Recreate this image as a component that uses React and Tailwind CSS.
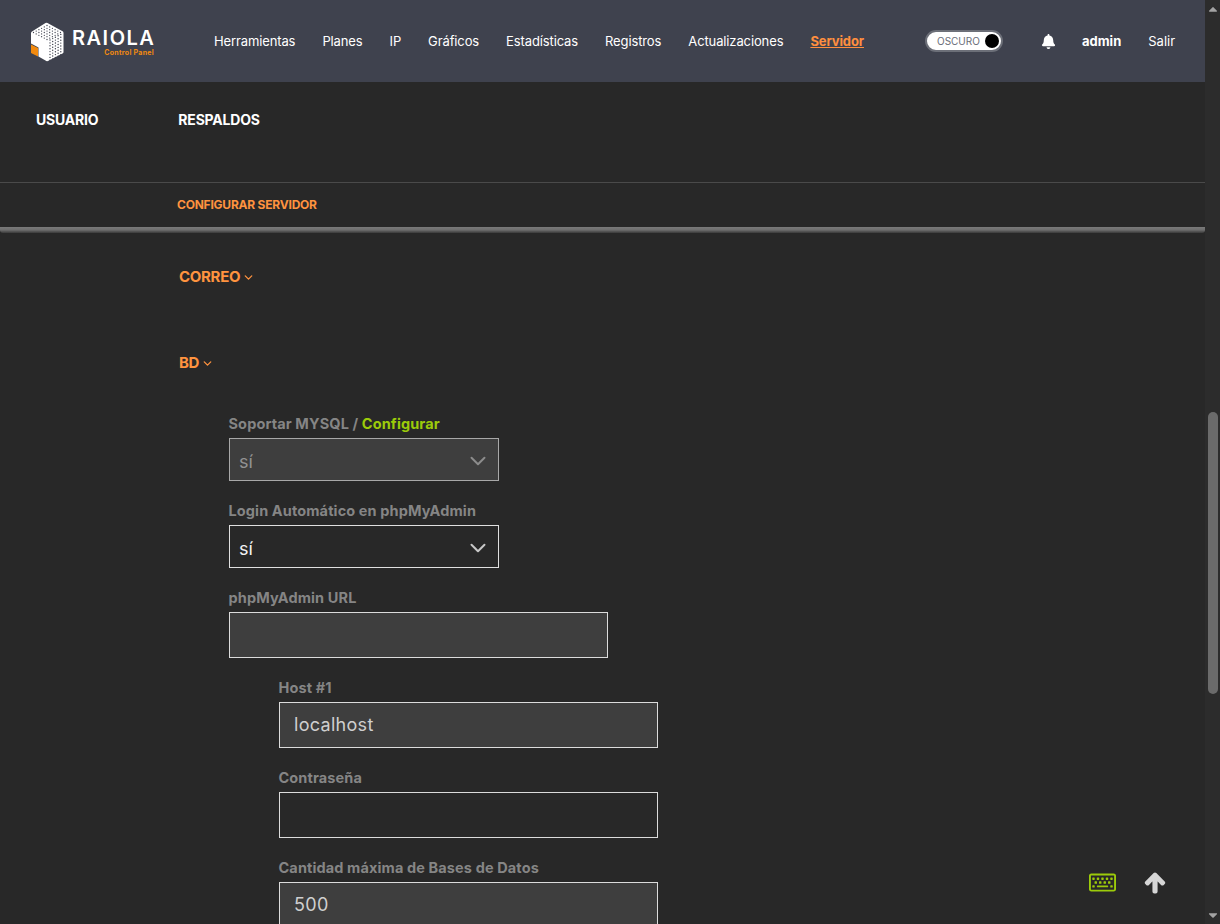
import React from "react";
import { FaBell, FaRegKeyboard, FaArrowUp, FaCaretUp, FaCaretDown } from "react-icons/fa";
import { ChevronDown } from "lucide-react";

const FONT = "font-['Inter','Open_Sans',sans-serif]";

function Logo() {
  const dots = [];
  // top face dots
  for (let i = 0; i < 6; i++) {
    for (let j = 0; j < 6; j++) {
      dots.push(<circle key={`t${i}${j}`} cx={17 + i * 2.7 - j * 2.7} cy={3.5 + i * 1.4 + j * 1.4} r="0.65" fill="#3f424e" />);
    }
  }
  // right face dots
  for (let i = 0; i < 5; i++) {
    for (let j = 0; j < 8; j++) {
      dots.push(<circle key={`r${i}${j}`} cx={20 + i * 2.7} cy={18 - i * 1.4 + j * 2.9} r="0.7" fill="#3f424e" />);
    }
  }
  return (
    <svg width="34" height="40" viewBox="0 0 34 40" className="shrink-0">
      <path d="M17.5 1 L33 9.5 Q33.500 10 33.500 11 L33.500 30 Q33.500 31 32.500 31.500 L18 39 Q16.500 39.500 15.500 38.500 L8.500 34.500 L8.500 25.500 L1 21.500 L1 11 Q1 10 2 9.500 L15.500 1 Q16.500 0.500 17.500 1 Z" fill="#fff" />
      {dots}
      <path d="M1 22.500 L8 26 L8 34.500 L1 31 Z" fill="#f28a0f" />
    </svg>
  );
}

function Label({ children }) {
  return <label className="-ml-[0.5px] block text-[14.5px] leading-[20px] font-bold tracking-[0.12px] text-[#858585]">{children}</label>;
}

function SelectBox({ disabled }) {
  return (
    <div className="relative mt-[4px] w-[270px]">
      <select
        disabled={disabled}
        defaultValue="si"
        className={`block h-[43px] w-full appearance-none rounded-none border pt-[4px] pl-[9px] text-[18px] outline-none ${
          disabled ? "border-[#a8a8a8] bg-[#3e3e3e] text-[#929292]" : "border-[#e0e0e0] bg-[#282828] text-[#f2f2f2]"
        }`}
      >
        <option value="si">sí</option>
      </select>
      <ChevronDown
        size={26}
        strokeWidth={1.8}
        className={`pointer-events-none absolute right-[8px] top-[10px] ${disabled ? "text-[#8c8c8c]" : "text-[#c8c8c8]"}`}
      />
    </div>
  );
}

function TextBox({ value = "", filled }) {
  return (
    <input
      readOnly
      value={value}
      className={`mt-[4px] block h-[46px] w-[379px] rounded-none border border-[#dcdcdc] px-[14px] pb-[2px] text-[18px] tracking-[0.3px] text-[#cfcfcf] outline-none ${
        filled ? "bg-[#3e3e3e]" : "bg-[#282828]"
      }`}
    />
  );
}

const NAV = ["Herramientas", "Planes", "IP", "Gráficos", "Estadísticas", "Registros", "Actualizaciones"];

export default function App() {
  return (
    <div className={`relative flex h-[924px] w-[1220px] overflow-hidden bg-[#282828] ${FONT}`}>
      <div className="w-[1205px] shrink-0">
        <header className="flex h-[82px] items-center bg-[#3f424e] pt-[1px] text-[13px] text-white">
          <div className="ml-[30px] flex w-[184px] items-center gap-[8px]">
            <Logo />
            <div className="flex w-[82px] flex-col">
              <span className="text-[20px] leading-[22px] font-semibold tracking-[1.5px] whitespace-nowrap text-white">RAIOLA</span>
              <span className="self-end text-[7px] leading-[7px] font-bold tracking-[0.3px] whitespace-nowrap text-[#f28a0f]">Control Panel</span>
            </div>
          </div>
          <nav className="flex w-[711px] items-center gap-[27px] tracking-[-0.12px]">
            {NAV.map((n) => (
              <a key={n} className="whitespace-nowrap">{n}</a>
            ))}
            <a className="font-bold whitespace-nowrap text-[#ff8f3f] underline">Servidor</a>
          </nav>
          <div className="-mt-[1px] flex h-[22px] w-[78px] items-center justify-between rounded-full border-2 border-[#6c6f78] bg-white pr-[2px] pl-[10px]">
            <span className="text-[10px] text-[#6a6e78]">OSCURO</span>
            <span className="h-[14px] w-[14px] rounded-full bg-black" />
          </div>
          <FaBell className="ml-[38px] text-[15px] text-white" />
          <span className="ml-[26px] font-bold">admin</span>
          <span className="ml-[27px]">Salir</span>
        </header>

        <div className="flex h-[101px] gap-[80px] border-b border-[#4a4a4a] pt-[29px] pl-[36px] text-[14px] leading-[18px] font-bold tracking-[-0.2px] text-white">
          <span>USUARIO</span>
          <span>RESPALDOS</span>
        </div>

        <div className="h-[44px] pt-[14px] pl-[177px] text-[12px] leading-[16px] font-bold tracking-[-0.22px] text-[#ff933f]">CONFIGURAR SERVIDOR</div>
        <div className="h-[6px] rounded-b-[3px] bg-gradient-to-b from-[#7a7a7a] via-[#6e6e6e] to-[#3a3a3a]" />

        <main className="pt-[34px] pl-[179px]">
          <h3 className="flex h-[20px] items-center gap-[3px] text-[15px] font-bold tracking-[-0.3px] text-[#ff933f]">
            CORREO <ChevronDown size={13} strokeWidth={2.4} className="-ml-[1px]" />
          </h3>
          <h3 className="mt-[66px] flex h-[20px] items-center gap-[3px] text-[15px] font-bold tracking-[-0.3px] text-[#ff933f]">
            BD <ChevronDown size={13} strokeWidth={2.4} className="-ml-[1px]" />
          </h3>

          <form className="mt-[41px] pl-[50px]">
            <Label>
              Soportar MYSQL / <span className="text-[#9ccb0a]">Configurar</span>
            </Label>
            <SelectBox disabled />
            <div className="mt-[20px]">
              <Label>Login Automático en phpMyAdmin</Label>
              <SelectBox />
            </div>
            <div className="mt-[20px]">
              <Label>phpMyAdmin URL</Label>
              <TextBox filled />
            </div>
            <div className="mt-[20px] pl-[50px]">
              <Label>Host #1</Label>
              <TextBox value="localhost" filled />
              <div className="mt-[20px]">
                <Label>Contraseña</Label>
                <TextBox />
              </div>
              <div className="mt-[20px]">
                <Label>Cantidad máxima de Bases de Datos</Label>
                <TextBox value="500" filled />
              </div>
            </div>
          </form>
        </main>
      </div>

      <aside className="flex h-full w-[15px] shrink-0 flex-col items-center bg-[#2c2c2c] text-[#a3a3a3]">
        <FaCaretUp className="mt-[2px] text-[14px]" />
        <div className="mt-[396px] h-[282px] w-[10px] rounded-full bg-[#6b6b6b]" />
        <FaCaretDown className="mt-auto mb-[2px] text-[14px]" />
      </aside>

      <FaRegKeyboard className="absolute top-[869px] left-[1089px] text-[27px] text-[#9ccb0a]" />
      <FaArrowUp stroke="currentColor" strokeWidth={40} className="absolute top-[872px] left-[1144px] text-[22px] text-[#d6d6d6]" />
    </div>
  );
}
